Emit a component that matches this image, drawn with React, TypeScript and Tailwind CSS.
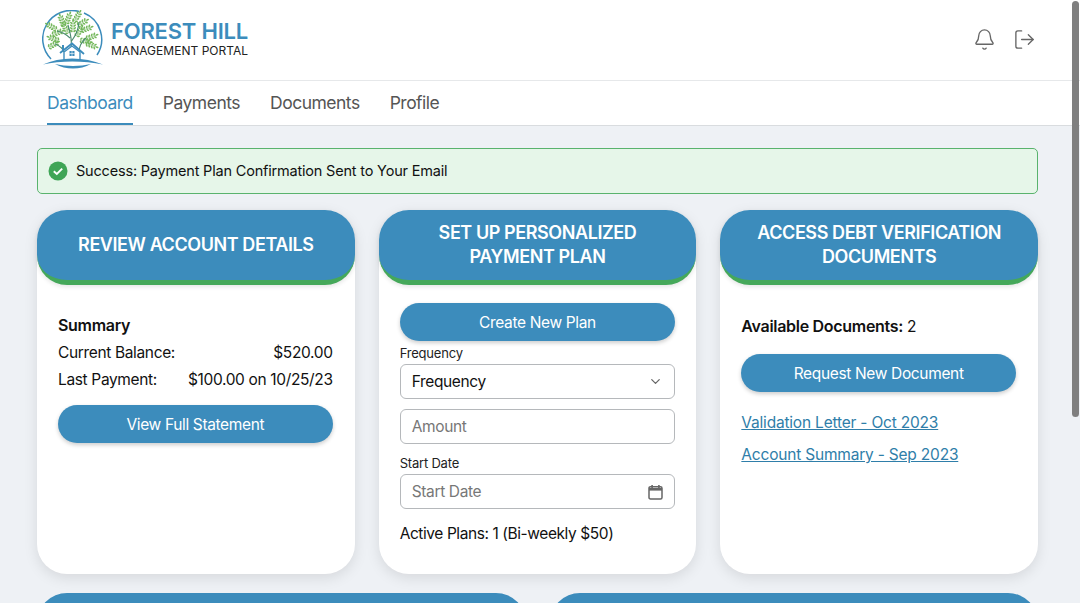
import { Bell, ChevronDown, LogOut } from "lucide-react"

const BLUE = "bg-[#3c8cbc]"

// Leaf sprays for the logo tree: [x, y, angle]
const branches: [number, number, number][] = [
  [10, 17, -150], [15, 23, -20], [12, 29, -160], [11, 35, -30], [20, 11, -110], [26, 9, -70], [24, 19, -120],
  [35, 7, -60], [40, 13, -30], [44, 19, -20], [37, 22, -60], [49, 27, -20], [43, 31, 10], [49, 35, 20], [31, 17, -90],
]

function Branch({ x, y, angle }: { x: number; y: number; angle: number }) {
  const leaves = [0, 1, 2, 3]
  return (
    <g transform={`translate(${x} ${y}) rotate(${angle})`}>
      <line x1="-5" y1="0" x2="6" y2="0" stroke="#5fa84d" strokeWidth="0.5" />
      {leaves.map((i) => (
        <g key={i}>
          <ellipse cx={-4 + i * 2.7} cy="-1.7" rx="1.5" ry="0.85" fill="#74b85c" transform={`rotate(-50 ${-4 + i * 2.7} -1.7)`} />
          <ellipse cx={-4 + i * 2.7} cy="1.7" rx="1.5" ry="0.85" fill="#74b85c" transform={`rotate(50 ${-4 + i * 2.7} 1.7)`} />
        </g>
      ))}
      <ellipse cx="6.5" cy="0" rx="1.5" ry="0.85" fill="#74b85c" />
    </g>
  )
}

function Logo() {
  return (
    <svg width="62" height="60" viewBox="0 0 62 60" className="shrink-0">
      <path d="M37 1.5A28.5 28.5 0 0 0 9 49" fill="none" stroke="#3c8cbc" strokeWidth="1.5" />
      <path d="M42 3A28.5 28.5 0 0 1 55 45" fill="none" stroke="#3c8cbc" strokeWidth="1.5" />
      {branches.map(([x, y, a]) => (
        <Branch key={`${x}-${y}`} x={x} y={y} angle={a} />
      ))}
      <path d="M29 40C30 32 29 24 26 15M29 32C33 26 36 22 37 12M28 28C24 24 20 22 15 21M37 43C37 36 39 33 44 28M22 42C21 38 18 36 13 34" fill="none" stroke="#4a8a70" strokeWidth="1.1" />
      <path d="M18 43L30 33.5L42 44" fill="none" stroke="#3c8cbc" strokeWidth="1.8" />
      <path d="M22 42V50H38V42L30 36Z" fill="#fff" stroke="#3c8cbc" strokeWidth="1.4" />
      <rect x="20" y="35" width="2" height="6" fill="#3c8cbc" />
      <rect x="27.5" y="41" width="5" height="5" fill="#3c8cbc" />
      <path d="M30 41V46M27.5 43.5H32.5" stroke="#fff" strokeWidth="0.6" />
      <path d="M1 54.5C18 46.5 42 46.5 61 54.5C42 50.5 18 50.5 1 54.5Z" fill="#3c8cbc" />
      <path d="M13 54C24 60 38 60 49 54C38 56.5 24 56.5 13 54Z" fill="#3c8cbc" />
    </svg>
  )
}

function CardHeader({ lines }: { lines: string[] }) {
  return (
    <div className={`${BLUE} h-[75px] shrink-0 rounded-[30px] border-b-[5px] border-[#45a85a] pb-[1px] flex flex-col items-center justify-center text-white text-[18px] leading-[24px] font-semibold tracking-[-0.42px] text-center shadow-[0_2px_4px_rgba(0,0,0,0.1)]`}>
      {lines.map((l) => (
        <div key={l}>{l}</div>
      ))}
    </div>
  )
}

function PillButton({ label }: { label: string }) {
  return (
    <button className={`${BLUE} w-full h-[38px] pt-[1px] rounded-full text-white text-[15.5px] tracking-[-0.35px] flex items-center justify-center shadow-[0_2px_4px_rgba(0,0,0,0.2)]`}>
      {label}
    </button>
  )
}

function Card({ lines, pad, children }: { lines: string[]; pad: string; children: React.ReactNode }) {
  return (
    <div className="h-[364px] bg-white rounded-[30px] flex flex-col shadow-[0_4px_14px_rgba(0,0,0,0.1)]">
      <CardHeader lines={lines} />
      <div className={`${pad} flex-1 flex flex-col text-[15.5px] tracking-[-0.35px]`}>{children}</div>
    </div>
  )
}

function FieldLabel({ text }: { text: string }) {
  return <div className="text-[13px] leading-[16px] tracking-[-0.2px] text-[#222]">{text}</div>
}

export default function App() {
  return (
    <div className="relative h-screen overflow-hidden bg-[#eef1f5] text-[#111] font-['Inter','Noto_Sans',sans-serif]">
      <header className="h-[81px] bg-white border-b border-[#e6e8ea] flex items-center justify-between pl-[42px] pr-[44px]">
        <div className="flex items-center gap-[7px]">
          <Logo />
          <div className="-mt-[3px]">
            <div className="text-[22px] leading-[24px] font-semibold text-[#3c8cbc] tracking-[-0.2px]">FOREST HILL</div>
            <div className="text-[12px] leading-[15px] text-[#222] tracking-[0.02px]">MANAGEMENT PORTAL</div>
          </div>
        </div>
        <div className="-mt-[2px] flex items-center gap-[17px] text-[#666]">
          <Bell size={23} strokeWidth={1.4} />
          <LogOut size={23} strokeWidth={1.4} />
        </div>
      </header>

      <nav className="h-[45px] bg-white border-b border-[#d9dcdf] flex gap-[30px] pl-[47px] text-[17.5px] tracking-[-0.5px] text-[#555]">
        <div className="h-[44px] pt-[2px] flex items-center text-[#3c8cbc] border-b-[2px] border-[#3c8cbc]">Dashboard</div>
        <div className="h-[44px] flex items-center">Payments</div>
        <div className="h-[44px] flex items-center">Documents</div>
        <div className="h-[44px] flex items-center">Profile</div>
      </nav>

      <main className="pl-[37px] pr-[42px] pt-[22px]">
        <div className="h-[46px] bg-[#e6f6e9] border border-[#59b36d] rounded-[5px] flex items-center gap-[8px] pl-[10px] text-[14.5px] tracking-[-0.19px] text-[#111]">
          <svg width="20" height="20" viewBox="0 0 20 20" className="shrink-0">
            <circle cx="10" cy="10" r="9.5" fill="#3fa556" />
            <path d="M5.8 10.3L8.8 13L14.2 7.6" fill="none" stroke="#fff" strokeWidth="1.9" />
          </svg>
          Success: Payment Plan Confirmation Sent to Your Email
        </div>

        <div className="grid grid-cols-3 gap-[24px] mt-[16px]">
          <Card lines={["REVIEW ACCOUNT DETAILS"]} pad="pl-[21px] pr-[22px]">
            <div className="pt-[27px] leading-[27px] text-[#111]">
              <div className="font-semibold text-[16px] tracking-[-0.3px]">Summary</div>
              <div className="flex justify-between"><span>Current Balance:</span><span>$520.00</span></div>
              <div className="flex justify-between"><span>Last Payment:</span><span>$100.00 on 10/25/23</span></div>
            </div>
            <div className="mt-[12px]"><PillButton label="View Full Statement" /></div>
          </Card>

          <Card lines={["SET UP PERSONALIZED", "PAYMENT PLAN"]} pad="pl-[21px] pr-[21px]">
            <div className="pt-[18px]"><PillButton label="Create New Plan" /></div>
            <div className="mt-[4px]"><FieldLabel text="Frequency" /></div>
            <div className="mt-[3px] h-[35px] rounded-[6px] border border-[#b5b8bb] flex items-center justify-between pl-[11px] pr-[11px]">
              Frequency
              <ChevronDown size={15} className="text-[#666]" />
            </div>
            <div className="mt-[10px] h-[35px] pt-[1px] rounded-[6px] border border-[#b5b8bb] flex items-center pl-[11px] text-[#777]">Amount</div>
            <div className="mt-[11px]"><FieldLabel text="Start Date" /></div>
            <div className="mt-[3px] h-[35px] rounded-[6px] border border-[#b5b8bb] flex items-center justify-between pl-[11px] pr-[11px] text-[#777]">
              Start Date
              <svg width="15" height="16" viewBox="0 0 15 16" className="shrink-0">
                <path d="M1 4.2C1 3.3 1.6 2.7 2.5 2.7H12.5C13.4 2.7 14 3.3 14 4.2V13.5C14 14.4 13.4 15 12.5 15H2.5C1.6 15 1 14.4 1 13.5Z" fill="none" stroke="#666" strokeWidth="1.5" />
                <path d="M1 4H14V6.6H1Z" fill="#666" />
                <rect x="3.3" y="1" width="1.6" height="3" fill="#666" />
                <rect x="10.1" y="1" width="1.6" height="3" fill="#666" />
              </svg>
            </div>
            <div className="mt-[15px] leading-[20px] tracking-[-0.42px]">Active Plans: 1 (Bi-weekly $50)</div>
          </Card>

          <Card lines={["ACCESS DEBT VERIFICATION", "DOCUMENTS"]} pad="pl-[21px] pr-[22px]">
            <div className="pt-[31px] leading-[20px]">
              <span className="font-semibold text-[16px] tracking-[-0.3px]">Available Documents:</span> 2
            </div>
            <div className="mt-[17px]"><PillButton label="Request New Document" /></div>
            <a className="mt-[21px] leading-[20px] tracking-[-0.2px] text-[#2f7ea9] underline">Validation Letter - Oct 2023</a>
            <a className="mt-[12px] leading-[20px] tracking-[-0.2px] text-[#2f7ea9] underline">Account Summary - Sep 2023</a>
          </Card>
        </div>

        <div className="grid grid-cols-2 gap-[24px] mt-[19px]">
          <div className={`${BLUE} h-[75px] rounded-[30px]`} />
          <div className={`${BLUE} h-[75px] rounded-[30px]`} />
        </div>
      </main>

      <div className="absolute right-[1px] top-[1px] w-[7px] h-[416px] rounded-full bg-[#7f7f7f]" />
    </div>
  )
}
